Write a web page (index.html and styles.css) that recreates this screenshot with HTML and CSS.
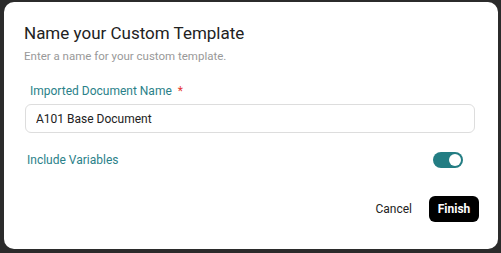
FILE: index.html
```html
<!DOCTYPE html>
<html>
<head>
    <title>Name your Custom Template</title>
    <link rel="stylesheet" href="styles.css">
</head>
<body>
    <div class="dialog">
        <h2 class="title">Name your Custom Template</h2>
        <p class="subtitle">Enter a name for your custom template.</p>

        <label class="field-label" for="docName">Imported Document Name <span class="required">*</span></label>
        <input type="text" id="docName" class="input-box" value="A101 Base Document">

        <div class="toggle-row">
            <span class="toggle-label">Include Variables</span>
            <span class="toggle on"><span class="knob"></span></span>
        </div>

        <div class="actions">
            <button type="button" class="btn-text">Cancel</button>
            <button type="button" class="btn-primary">Finish</button>
        </div>
    </div>
</body>
</html>
```

FILE: styles.css
```css
body {
    font-family: Roboto, "Liberation Sans", sans-serif;
    margin: 0;
    padding: 2px 3px 4px 4px;
    background-color: #2b2b2b;
}
.dialog {
    height: 247px;
    box-sizing: border-box;
    padding: 20px 19px 0 20px;
    background-color: #fff;
    border-radius: 10px;
}
.title {
    margin: 0;
    font-size: 17px;
    font-weight: 400;
    line-height: 22px;
    color: #222;
}
.subtitle {
    margin: 4px 0 0;
    font-size: 11.5px;
    line-height: 17px;
    color: #999;
}
.field-label {
    display: block;
    margin: 18px 0 0 6px;
    font-size: 12px;
    line-height: 17px;
    color: #2a8189;
}
.required {
    color: #e53935;
    margin-left: 3px;
}
.input-box {
    display: block;
    box-sizing: border-box;
    width: calc(100% - 5px);
    height: 29px;
    margin: 4px 0 0 1px;
    padding: 0 10px;
    font-family: Roboto, "Liberation Sans", sans-serif;
    font-size: 12px;
    color: #222;
    border: 1px solid #ddd;
    border-radius: 6px;
    outline: none;
}
.toggle-row {
    display: flex;
    align-items: center;
    justify-content: space-between;
    height: 16px;
    margin: 19px 16px 0 3px;
}
.toggle-label {
    font-size: 12px;
    color: #2a8189;
}
.toggle {
    display: flex;
    align-items: center;
    justify-content: flex-end;
    width: 30px;
    height: 16px;
    box-sizing: border-box;
    padding: 2px;
    border-radius: 8px;
    background-color: #237d83;
}
.knob {
    width: 12px;
    height: 12px;
    border-radius: 50%;
    background-color: #fff;
}
.actions {
    display: flex;
    justify-content: flex-end;
    align-items: center;
    gap: 17px;
    margin-top: 28px;
}
.btn-text {
    padding: 0;
    font-family: Roboto, "Liberation Sans", sans-serif;
    font-size: 12px;
    color: #222;
    background: none;
    border: none;
    cursor: pointer;
}
.btn-primary {
    width: 50px;
    height: 26px;
    padding: 0;
    font-family: Roboto, "Liberation Sans", sans-serif;
    font-size: 12px;
    font-weight: bold;
    color: #fff;
    background-color: #000;
    border: none;
    border-radius: 6px;
    cursor: pointer;
}
```
